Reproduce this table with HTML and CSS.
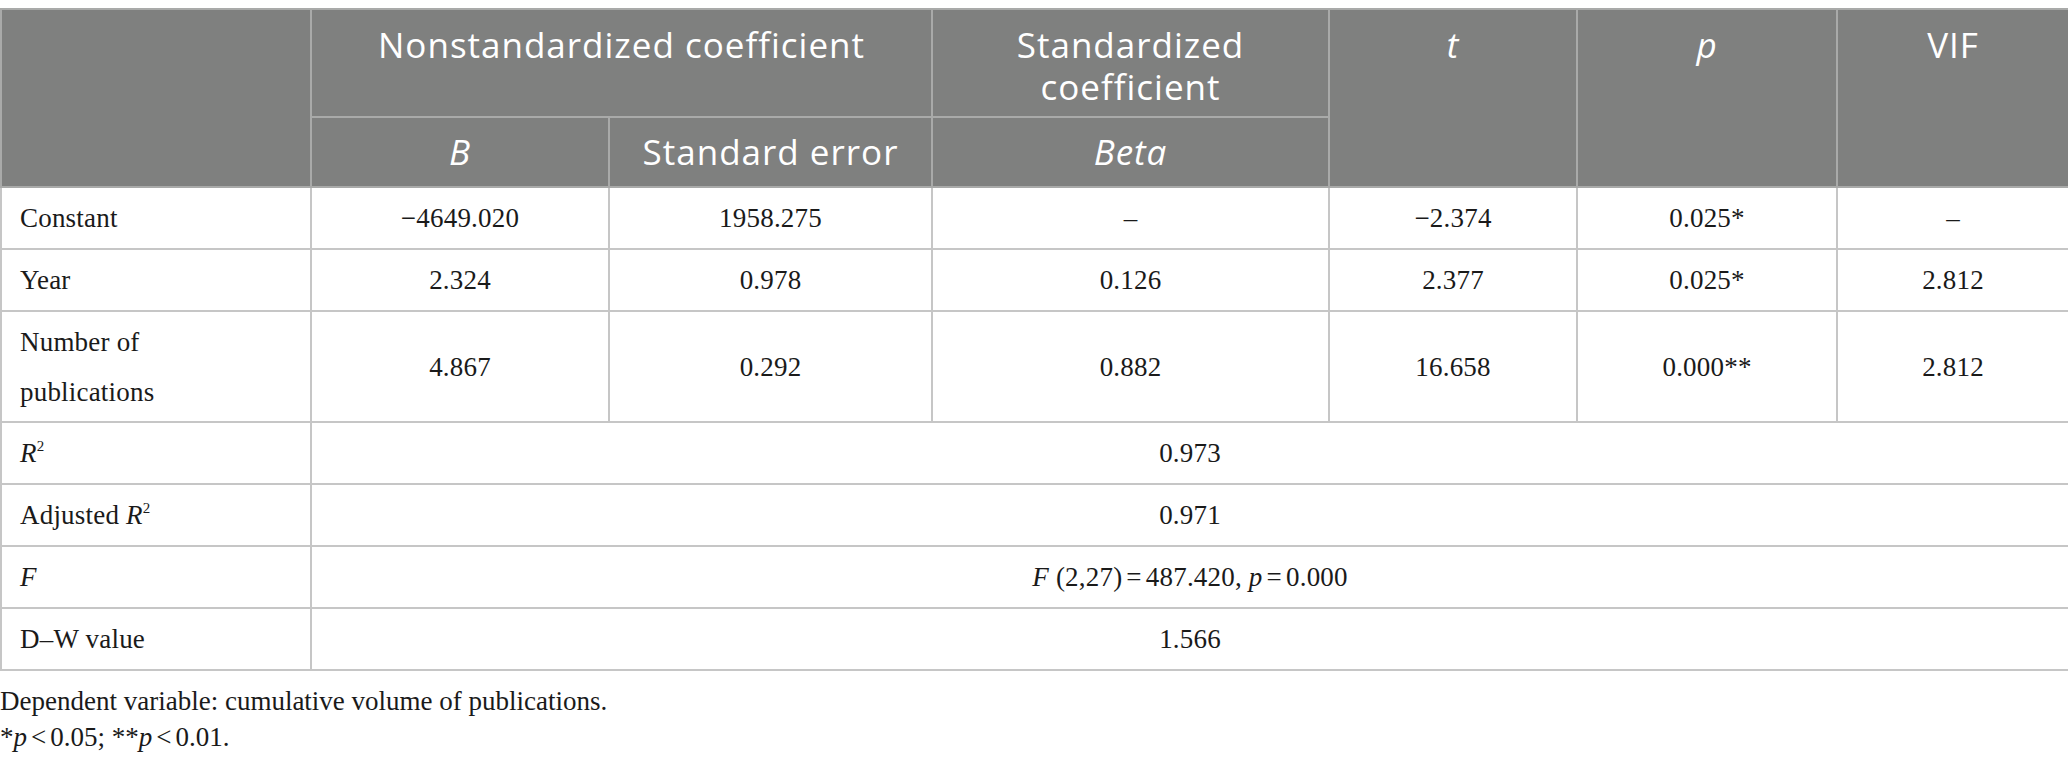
FILE: index.html
```html
<!DOCTYPE html>
<html>
<head>
<meta charset="utf-8">
<link rel="stylesheet" href="styles.css">
</head>
<body>
<div class="wrap">
<table class="reg">
  <colgroup>
    <col class="c1"><col class="c2"><col class="c3"><col class="c4"><col class="c5"><col class="c6"><col class="c7">
  </colgroup>
  <thead>
    <tr class="h1">
      <th rowspan="2"></th>
      <th colspan="2">Nonstandardized coefficient</th>
      <th>Standardized<br>coefficient</th>
      <th rowspan="2"><i>t</i></th>
      <th rowspan="2"><i>p</i></th>
      <th rowspan="2">VIF</th>
    </tr>
    <tr class="h2">
      <th><i>B</i></th>
      <th>Standard error</th>
      <th><i>Beta</i></th>
    </tr>
  </thead>
  <tbody>
    <tr>
      <td class="lab">Constant</td>
      <td>−4649.020</td>
      <td>1958.275</td>
      <td>–</td>
      <td>−2.374</td>
      <td>0.025*</td>
      <td>–</td>
    </tr>
    <tr>
      <td class="lab">Year</td>
      <td>2.324</td>
      <td>0.978</td>
      <td>0.126</td>
      <td>2.377</td>
      <td>0.025*</td>
      <td>2.812</td>
    </tr>
    <tr class="tall">
      <td class="lab">Number of<br>publications</td>
      <td>4.867</td>
      <td>0.292</td>
      <td>0.882</td>
      <td>16.658</td>
      <td>0.000**</td>
      <td>2.812</td>
    </tr>
    <tr>
      <td class="lab"><i>R</i><sup>2</sup></td>
      <td colspan="6">0.973</td>
    </tr>
    <tr>
      <td class="lab">Adjusted <i>R</i><sup>2</sup></td>
      <td colspan="6">0.971</td>
    </tr>
    <tr>
      <td class="lab"><i>F</i></td>
      <td colspan="6"><i>F</i> (2,27)<span class="eq">=</span>487.420, <i>p</i><span class="eq">=</span>0.000</td>
    </tr>
    <tr>
      <td class="lab">D–W value</td>
      <td colspan="6">1.566</td>
    </tr>
  </tbody>
</table>
<div class="notes">
  <p>Dependent variable: cumulative volume of publications.</p>
  <p>*<i>p</i><span class="lt">&lt;</span>0.05; **<i>p</i><span class="lt">&lt;</span>0.01.</p>
</div>
</div>
</body>
</html>
```
FILE: styles.css
```css
html, body {
  margin: 0;
  padding: 0;
  background: #ffffff;
}
.wrap {
  padding-top: 8px;
  width: 2068px;
}
.reg {
  width: 2068px;
  border-collapse: collapse;
  table-layout: fixed;
  font-family: "Liberation Serif", "Times New Roman", serif;
  font-size: 27px;
  letter-spacing: 0.2px;
  color: #1a1a1a;
}
.c1 { width: 310px; }
.c2 { width: 298px; }
.c3 { width: 323px; }
.c4 { width: 397px; }
.c5 { width: 248px; }
.c6 { width: 260px; }
.c7 { width: 232px; }

.reg th {
  background: #7f807f;
  color: #ffffff;
  font-family: "Open Sans", "Liberation Sans", sans-serif;
  font-weight: 400;
  font-size: 35px;
  line-height: 42px;
  letter-spacing: 1px;
  border: 2px solid #a9aaa9;
  vertical-align: top;
  text-align: center;
  padding: 0 8px;
}
.reg tr.h1 th {
  height: 108px;
  padding-top: 14px;
  box-sizing: border-box;
}
.reg tr.h2 th {
  height: 68px;
  vertical-align: middle;
}
.reg td {
  border: 2px solid #c6c6c6;
  text-align: center;
  vertical-align: middle;
  height: 62px;
  padding: 4px 8px;
  line-height: 46px;
  box-sizing: border-box;
}
.reg tr.tall td {
  height: 111px;
  line-height: 50px;
}
.reg td.lab {
  text-align: left;
  padding-left: 18px;
}
.reg sup {
  font-size: 15px;
  line-height: 0;
  vertical-align: 11px;
}
.eq {
  padding: 0 4px;
}
.lt {
  padding: 0 4px;
}
.notes {
  font-family: "Liberation Serif", "Times New Roman", serif;
  font-size: 27px;
  color: #1a1a1a;
  padding-top: 12px;
}
.notes p {
  margin: 0;
  line-height: 36px;
}
```
